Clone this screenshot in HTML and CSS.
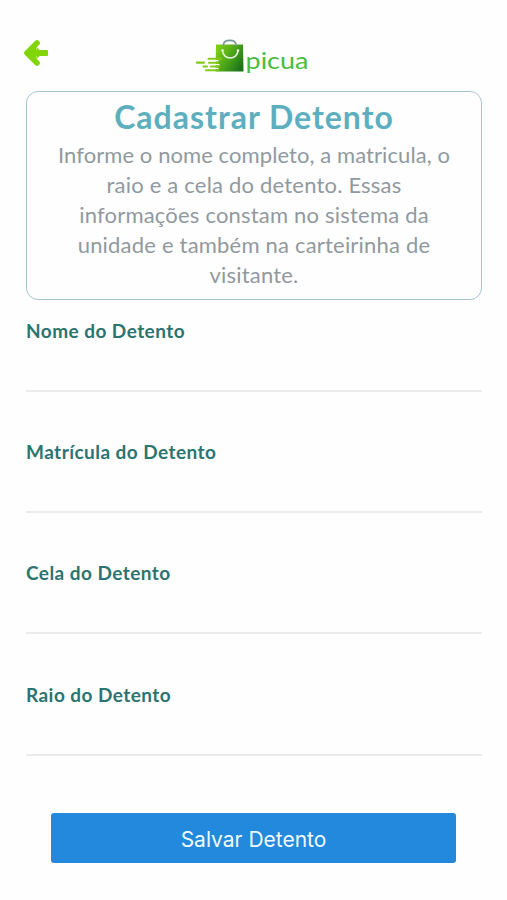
FILE: index.html
```html
<!DOCTYPE html>
<html lang="pt-BR">
<head>
<meta charset="utf-8">
<title>Cadastrar Detento</title>
<link rel="stylesheet" href="styles.css">
</head>
<body>
<header class="topbar">
  <a class="back" href="#" aria-label="Voltar">
    <svg width="26" height="28" viewBox="0 0 26 28"><path d="M13.500 4.500 4 14 13.500 23.500Z" fill="#83d50b"/><path d="M14 4 4 14 14 24" fill="none" stroke="#83d50b" stroke-width="5.6" stroke-linecap="round" stroke-linejoin="round"/><rect x="4" y="11" width="21" height="6" rx="1" fill="#83d50b"/><path d="M13.800 10.900V8.200L16.500 10.900ZM13.800 17.100V19.800L16.500 17.100Z" fill="#83d50b"/></svg>
  </a>
  <svg class="logo" width="116" height="36" viewBox="0 0 116 36">
    <defs><linearGradient id="bag" x1="0" y1="0.2" x2="1" y2="0.8"><stop offset="0" stop-color="#80cf16"/><stop offset=".5" stop-color="#4ba51a"/><stop offset="1" stop-color="#17701a"/></linearGradient></defs>
    <path d="M21 6.500H48L48.500 33.500H20.500Z" fill="url(#bag)"/>
    <path d="M28.500 8V6.500C29 1 40.500 1 41 6.500V8" fill="none" stroke="#77979c" stroke-width="1.6"/>
    <path d="M27.500 12.500C28 22.500 42.500 22.500 43 12.500" fill="none" stroke="#e6f5db" stroke-width="1.5"/>
    <circle cx="27.500" cy="12.500" r="1.300" fill="#e6f5db"/><circle cx="43" cy="12.500" r="1.300" fill="#e6f5db"/>
    <path d="M18 22.700H23M18 26.600H24M18 30.400H23" fill="none" stroke="#fefefe" stroke-width="1.400" stroke-linecap="round"/>
    <path d="M13.500 20.800H26M1.800 24.600H9M14 24.700H23M8.500 28.500H12M16 28.500H24M11 32.300H23" fill="none" stroke="#83c91c" stroke-width="2.100" stroke-linecap="round"/>
    <text class="brand" x="50.500" y="30.500" textLength="63" lengthAdjust="spacingAndGlyphs">picua</text>
  </svg>
</header>
<main class="content">
  <section class="intro">
    <h1>Cadastrar Detento</h1>
    <p><span class="lead">Informe o nome completo, a matricula, o</span><br>raio e a cela do detento. Essas<br>informações constam no sistema da<br>unidade e também na carteirinha de<br>visitante.</p>
  </section>
  <form class="form">
    <label class="field"><span>Nome do Detento</span><input type="text"></label>
    <label class="field"><span>Matrícula do Detento</span><input type="text"></label>
    <label class="field"><span>Cela do Detento</span><input type="text"></label>
    <label class="field"><span>Raio do Detento</span><input type="text"></label>
    <button class="save" type="button">Salvar Detento</button>
  </form>
</main>
</body>
</html>
```
FILE: styles.css
```css
* { box-sizing: border-box; }
body { margin: 0; min-height: 900px; background: #fefefe; font-family: Lato, sans-serif; }
.topbar { height: 91px; padding: 38px 24px 0 23px; display: grid; grid-template-columns: 172px 116px 1fr; align-items: start; }
.back { display: block; height: 28px; padding-top: 1px; }
.back svg { display: block; }
.logo { display: block; }
.brand { font-family: Lato, sans-serif; font-size: 22.5px; fill: #49bd3d; }
.content { padding: 0 25px 0 26px; }
.intro { height: 209px; border: 1.5px solid #a5c6ce; border-radius: 12px; text-align: center; padding-top: 6px; }
h1 { margin: 0; font-size: 32px; line-height: 38px; font-weight: 700; letter-spacing: 1px; color: #5dafbf; }
p { margin: 4px 0 0; font-size: 22px; line-height: 30px; letter-spacing: .2px; color: #91999f; }
.lead { letter-spacing: .08px; }
.form { display: flex; flex-direction: column; padding-top: 19px; }
.field { height: 121.2px; font-size: 19px; line-height: 24px; font-weight: 700; letter-spacing: .45px; color: #2c7471; }
.field span { display: block; }
.field input { display: block; width: 100%; height: 49px; border: 0; border-bottom: 2px solid #e9ebec; background: transparent; outline: 0; padding: 0; font: inherit; }
.save { width: 405px; height: 50px; margin: 9px 0 0 25px; border: 0; border-radius: 3px; background: #2289dc; color: #effaff; font: 400 21px Inter, sans-serif; padding: 3px 0 0; }
```
